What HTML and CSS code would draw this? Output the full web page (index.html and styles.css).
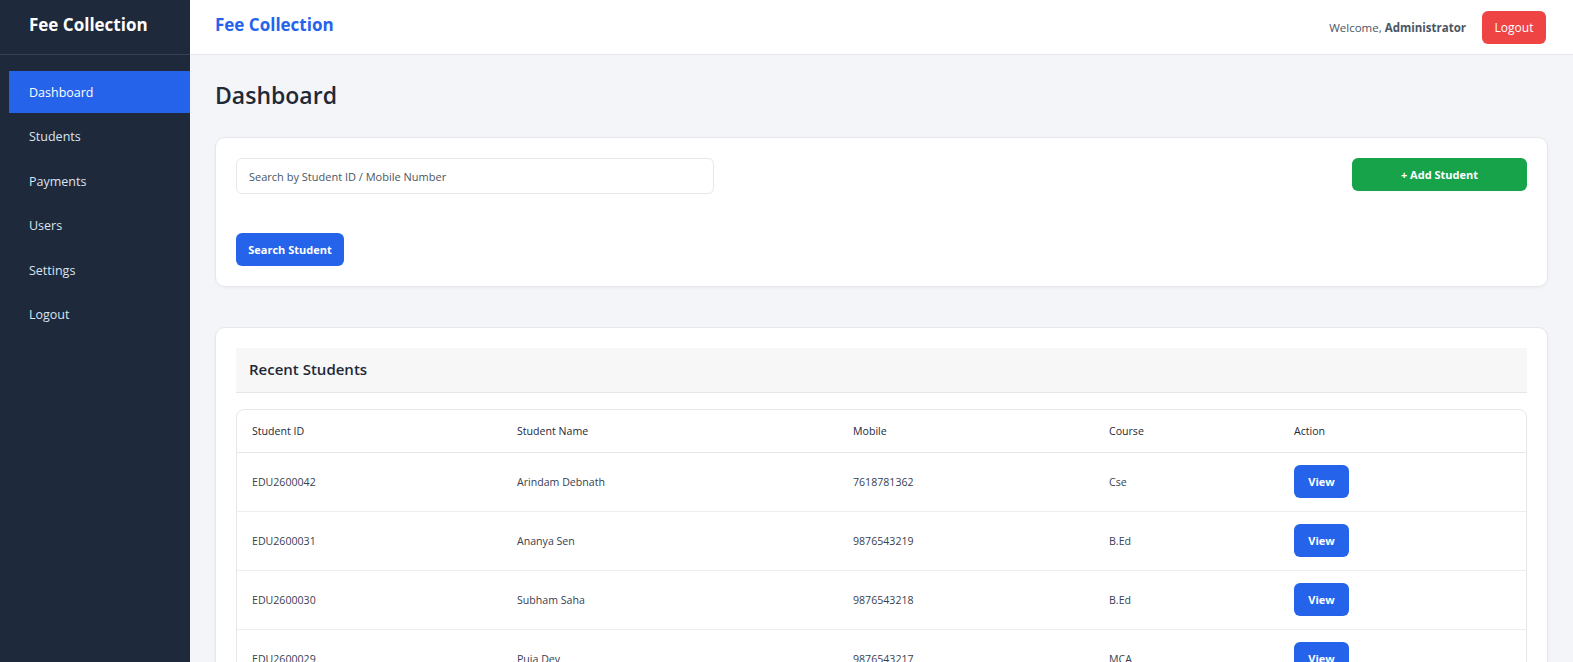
FILE: index.html
```html
<!DOCTYPE html>
<html lang="en">
<head>
    <meta charset="UTF-8">
    <meta name="viewport" content="width=device-width, initial-scale=1.0">
    <title>Fee Collection - Dashboard</title>
    <link rel="stylesheet" href="styles.css">
</head>
<body>

    <!-- Sidebar -->
    <aside class="sidebar">
        <div class="sidebar-brand">Fee Collection</div>
        <nav class="sidebar-nav">
            <a href="#" class="nav-link active">Dashboard</a>
            <a href="#" class="nav-link">Students</a>
            <a href="#" class="nav-link">Payments</a>
            <a href="#" class="nav-link">Users</a>
            <a href="#" class="nav-link">Settings</a>
            <a href="#" class="nav-link">Logout</a>
        </nav>
    </aside>

    <!-- Main -->
    <div class="main">
        <header class="topbar">
            <div class="topbar-title">Fee Collection</div>
            <div class="topbar-right">
                <span class="welcome">Welcome, <b>Administrator</b></span>
                <button class="btn btn-danger">Logout</button>
            </div>
        </header>

        <div class="content">
            <h1>Dashboard</h1>

            <div class="card search-card">
                <div class="search-row">
                    <input type="text" class="search-input" placeholder="Search by Student ID / Mobile Number">
                    <button class="btn btn-success btn-add">+ Add Student</button>
                </div>
                <button class="btn btn-primary btn-search">Search Student</button>
            </div>

            <div class="card">
                <div class="card-header">Recent Students</div>
                <div class="table-wrap">
                    <table>
                        <thead>
                            <tr>
                                <th class="col-id">Student ID</th>
                                <th class="col-name">Student Name</th>
                                <th class="col-mobile">Mobile</th>
                                <th class="col-course">Course</th>
                                <th>Action</th>
                            </tr>
                        </thead>
                        <tbody>
                            <tr>
                                <td>EDU2600042</td>
                                <td>Arindam Debnath</td>
                                <td>7618781362</td>
                                <td>Cse</td>
                                <td><button class="btn btn-primary btn-view">View</button></td>
                            </tr>
                            <tr>
                                <td>EDU2600031</td>
                                <td>Ananya Sen</td>
                                <td>9876543219</td>
                                <td>B.Ed</td>
                                <td><button class="btn btn-primary btn-view">View</button></td>
                            </tr>
                            <tr>
                                <td>EDU2600030</td>
                                <td>Subham Saha</td>
                                <td>9876543218</td>
                                <td>B.Ed</td>
                                <td><button class="btn btn-primary btn-view">View</button></td>
                            </tr>
                            <tr>
                                <td>EDU2600029</td>
                                <td>Puja Dey</td>
                                <td>9876543217</td>
                                <td>MCA</td>
                                <td><button class="btn btn-primary btn-view">View</button></td>
                            </tr>
                        </tbody>
                    </table>
                </div>
            </div>
        </div>
    </div>

</body>
</html>
```

FILE: styles.css
```css
/* General */
* {
    box-sizing: border-box;
}

body {
    font-family: 'Open Sans', 'Noto Sans', sans-serif;
    margin: 0;
    background: #f4f5f9;
    color: #1f2937;
    display: flex;
    min-height: 100vh;
}

/* Sidebar */
.sidebar {
    width: 190px;
    flex-shrink: 0;
    background: #1e293b;
    color: #fff;
}

.sidebar-brand {
    height: 55px;
    padding: 0 0 6px 29px;
    display: flex;
    align-items: center;
    font-size: 17px;
    font-weight: 700;
    border-bottom: 1px solid #334155;
    margin-bottom: 16px;
}

.sidebar-nav {
    display: flex;
    flex-direction: column;
    gap: 2.6px;
    padding-left: 9px;
}

.nav-link {
    height: 42px;
    display: flex;
    align-items: center;
    padding-left: 20px;
    color: #dbe4ef;
    font-size: 12.5px;
    text-decoration: none;
}

.nav-link.active {
    background: #2563eb;
    color: #fff;
}

/* Main */
.main {
    flex: 1;
    min-width: 0;
}

.topbar {
    height: 55px;
    background: #fff;
    border-bottom: 1px solid #e5e7eb;
    display: flex;
    align-items: center;
    justify-content: space-between;
    padding: 0 27px 0 25px;
}

.topbar-title {
    color: #2563eb;
    font-size: 17px;
    font-weight: 700;
    padding-bottom: 6px;
}

.topbar-right {
    display: flex;
    align-items: center;
    gap: 16px;
}

.welcome {
    font-size: 11.5px;
    color: #4b5563;
}

.content {
    padding: 24px 25px 25px;
}

h1 {
    font-size: 23px;
    font-weight: 600;
    margin: 0 0 26px;
    color: #1f2937;
}

/* Cards */
.card {
    background: #fff;
    border: 1px solid #e5e7eb;
    border-radius: 10px;
    box-shadow: 0 1px 3px rgba(0,0,0,0.04);
    padding: 20px;
    margin-bottom: 40px;
}

.search-row {
    display: flex;
    justify-content: space-between;
    align-items: flex-start;
    margin-bottom: 39px;
}

.search-input {
    width: 478px;
    height: 36px;
    padding: 0 12px;
    border: 1px solid #e5e7eb;
    border-radius: 6px;
    font-family: inherit;
    font-size: 11px;
    color: #374151;
}

.search-input::placeholder {
    color: #4b5563;
}

/* Buttons */
.btn {
    border: none;
    border-radius: 6px;
    color: #fff;
    font-family: inherit;
    font-size: 11px;
    font-weight: 700;
    height: 33px;
    padding: 0 16px;
    cursor: pointer;
}

.btn-primary {
    background: #2563eb;
}

.btn-success {
    background: #16a34a;
}

.btn-danger {
    background: #ef4444;
    font-weight: 400;
    font-size: 12px;
    width: 64px;
    padding: 0;
}

.btn-add {
    width: 175px;
}

.btn-search {
    width: 108px;
    padding: 0;
}

.btn-view {
    width: 55px;
    padding: 0;
}

/* Table */
.card-header {
    background: #f7f7f8;
    border-bottom: 1px solid #e5e7eb;
    height: 45px;
    padding: 0 13px 2px;
    display: flex;
    align-items: center;
    font-size: 15px;
    font-weight: 600;
    margin-bottom: 16px;
}

.table-wrap {
    border: 1px solid #e5e7eb;
    border-radius: 8px;
    overflow: hidden;
}

table {
    width: 100%;
    border-collapse: collapse;
    font-size: 10.6px;
}

th {
    text-align: left;
    font-weight: 400;
    color: #1f2937;
    height: 42px;
    padding: 0 15px;
    border-bottom: 1px solid #e5e7eb;
}

td {
    height: 59px;
    padding: 0 15px;
    color: #374151;
    border-bottom: 1px solid #eceef1;
}

.col-id {
    width: 265px;
}

.col-name {
    width: 336px;
}

.col-mobile {
    width: 256px;
}

.col-course {
    width: 185px;
}
```
